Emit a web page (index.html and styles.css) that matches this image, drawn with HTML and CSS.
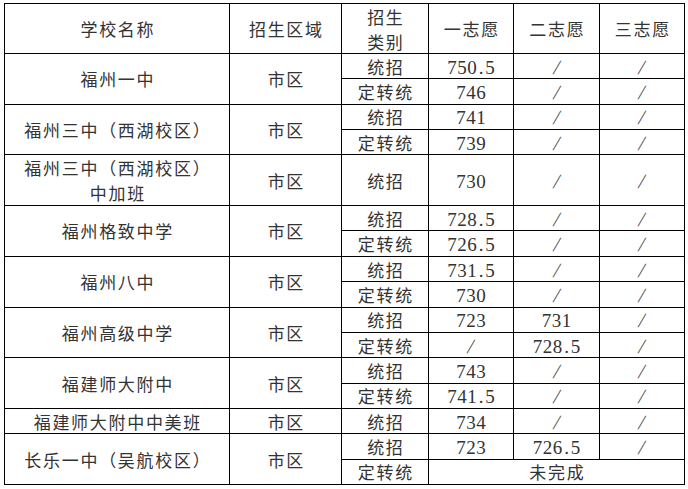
FILE: index.html
```html
<!DOCTYPE html>
<html lang="zh-CN">
<head>
<meta charset="utf-8">
<title>招生录取分数线</title>
<link rel="stylesheet" href="styles.css">
</head>
<body>
<div class="sheet">
  <div class="c">学校名称</div>
  <div class="c">招生区域</div>
  <div class="c"><span>招生<br>类别</span></div>
  <div class="c">一志愿</div>
  <div class="c">二志愿</div>
  <div class="c">三志愿</div>

  <div class="c r2">福州一中</div>
  <div class="c r2">市区</div>
  <div class="c">统招</div>
  <div class="c num">750<span class="dot">.</span>5</div>
  <div class="c num"><span class="sl">/</span></div>
  <div class="c num"><span class="sl">/</span></div>
  <div class="c">定转统</div>
  <div class="c num">746</div>
  <div class="c num"><span class="sl">/</span></div>
  <div class="c num"><span class="sl">/</span></div>

  <div class="c r2">福州三中（西湖校区）</div>
  <div class="c r2">市区</div>
  <div class="c">统招</div>
  <div class="c num">741</div>
  <div class="c num"><span class="sl">/</span></div>
  <div class="c num"><span class="sl">/</span></div>
  <div class="c">定转统</div>
  <div class="c num">739</div>
  <div class="c num"><span class="sl">/</span></div>
  <div class="c num"><span class="sl">/</span></div>

  <div class="c r2"><span>福州三中（西湖校区）<br>中加班</span></div>
  <div class="c r2">市区</div>
  <div class="c r2">统招</div>
  <div class="c num r2">730</div>
  <div class="c num r2"><span class="sl">/</span></div>
  <div class="c num r2"><span class="sl">/</span></div>

  <div class="c r2">福州格致中学</div>
  <div class="c r2">市区</div>
  <div class="c">统招</div>
  <div class="c num">728<span class="dot">.</span>5</div>
  <div class="c num"><span class="sl">/</span></div>
  <div class="c num"><span class="sl">/</span></div>
  <div class="c">定转统</div>
  <div class="c num">726<span class="dot">.</span>5</div>
  <div class="c num"><span class="sl">/</span></div>
  <div class="c num"><span class="sl">/</span></div>

  <div class="c r2">福州八中</div>
  <div class="c r2">市区</div>
  <div class="c">统招</div>
  <div class="c num">731<span class="dot">.</span>5</div>
  <div class="c num"><span class="sl">/</span></div>
  <div class="c num"><span class="sl">/</span></div>
  <div class="c">定转统</div>
  <div class="c num">730</div>
  <div class="c num"><span class="sl">/</span></div>
  <div class="c num"><span class="sl">/</span></div>

  <div class="c r2">福州高级中学</div>
  <div class="c r2">市区</div>
  <div class="c">统招</div>
  <div class="c num">723</div>
  <div class="c num">731</div>
  <div class="c num"><span class="sl">/</span></div>
  <div class="c">定转统</div>
  <div class="c num"><span class="sl">/</span></div>
  <div class="c num">728<span class="dot">.</span>5</div>
  <div class="c num"><span class="sl">/</span></div>

  <div class="c r2">福建师大附中</div>
  <div class="c r2">市区</div>
  <div class="c">统招</div>
  <div class="c num">743</div>
  <div class="c num"><span class="sl">/</span></div>
  <div class="c num"><span class="sl">/</span></div>
  <div class="c">定转统</div>
  <div class="c num">741<span class="dot">.</span>5</div>
  <div class="c num"><span class="sl">/</span></div>
  <div class="c num"><span class="sl">/</span></div>

  <div class="c">福建师大附中中美班</div>
  <div class="c">市区</div>
  <div class="c">统招</div>
  <div class="c num">734</div>
  <div class="c num"><span class="sl">/</span></div>
  <div class="c num"><span class="sl">/</span></div>

  <div class="c r2">长乐一中（吴航校区）</div>
  <div class="c r2">市区</div>
  <div class="c">统招</div>
  <div class="c num">723</div>
  <div class="c num">726<span class="dot">.</span>5</div>
  <div class="c num"><span class="sl">/</span></div>
  <div class="c">定转统</div>
  <div class="c s3">未完成</div>
</div>
</body>
</html>
```

FILE: styles.css
```css
html, body {
  margin: 0;
  padding: 0;
  background: #fff;
}

.sheet {
  display: grid;
  grid-template-columns: 224px 111px 86px 84px 85px 84px;
  grid-template-rows: 49px repeat(17, minmax(0, 1fr));
  width: 681px;
  height: 482px;
  box-sizing: border-box;
  padding: 1px;
  gap: 1px;
  background: #000;
  margin: 3px 0 0 4px;
}

.c {
  background: #fff;
  display: flex;
  align-items: center;
  justify-content: center;
  text-align: center;
  overflow: hidden;
  font-family: "Noto Sans CJK SC", sans-serif;
  font-size: 17px;
  letter-spacing: 1.7px;
  padding-left: 1.7px;
  line-height: 25px;
  color: #333;
}

.num {
  font-family: "Liberation Serif", "Noto Sans CJK SC", serif;
  font-size: 19px;
  letter-spacing: 0.5px;
  padding-left: 0.5px;
  padding-top: 2px;
}

.dot {
  display: inline-block;
  width: 8px;
  text-align: center;
}

.sl {
  display: inline-block;
  font-size: 20px;
  transform: skewX(-14deg);
  color: #444;
}

.r2 {
  grid-row: span 2;
}

.s3 {
  grid-column: span 3;
}
```
